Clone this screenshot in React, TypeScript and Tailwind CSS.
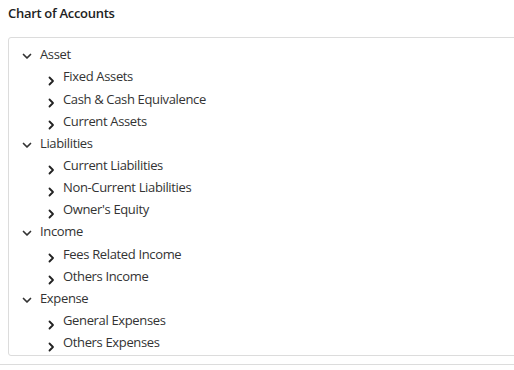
import React from "react";

type Node = { label: string; children?: string[] };

const data: Node[] = [
  { label: "Asset", children: ["Fixed Assets", "Cash & Cash Equivalence", "Current Assets"] },
  { label: "Liabilities", children: ["Current Liabilities", "Non-Current Liabilities", "Owner's Equity"] },
  { label: "Income", children: ["Fees Related Income", "Others Income"] },
  { label: "Expense", children: ["General Expenses", "Others Expenses"] },
];

function Down() {
  return (
    <svg width="10" height="7" viewBox="0 0 10 7" className="mt-[9px]">
      <path d="M1.5 1.5 L5 5 L8.5 1.5" fill="none" stroke="#333" strokeWidth="1.7" strokeLinecap="round" strokeLinejoin="round" />
    </svg>
  );
}

function Right() {
  return (
    <svg width="7" height="10" viewBox="0 0 7 10" className="mt-[10px]">
      <path d="M1.5 1.5 L5 5 L1.5 8.5" fill="none" stroke="#222" strokeWidth="1.8" strokeLinecap="round" strokeLinejoin="round" />
    </svg>
  );
}

export default function App() {
  return (
    <div
      className="w-[514px] h-[370px] overflow-hidden bg-white text-[#333]"
      style={{ fontFamily: '"Open Sans", "Noto Sans", sans-serif' }}
    >
      <div className="pl-2 pt-[4px] h-[37px] text-[13px] tracking-[-0.3px] font-semibold text-[#222]">Chart of Accounts</div>
      <div className="ml-2 w-[520px] border border-[#dcdcdc] rounded-[3px] pt-[6px] pb-[1px]">
        {data.map((n) => (
          <div key={n.label}>
            <div className="flex items-center h-[22.15px] pl-[13px] text-[13px] tracking-[-0.35px]">
              <div className="w-[18px] flex items-start h-full justify-start">
                <Down />
              </div>
              <span>{n.label}</span>
            </div>
            {n.children?.map((c) => (
              <div key={c} className="flex items-center h-[22.15px] pl-[39px] text-[13px] tracking-[-0.35px]">
                <div className="w-[15px] flex items-start h-full">
                  <Right />
                </div>
                <span>{c}</span>
              </div>
            ))}
          </div>
        ))}
      </div>
      <div className="mt-[8px] border-t border-[#dcdcdc]" />
    </div>
  );
}
